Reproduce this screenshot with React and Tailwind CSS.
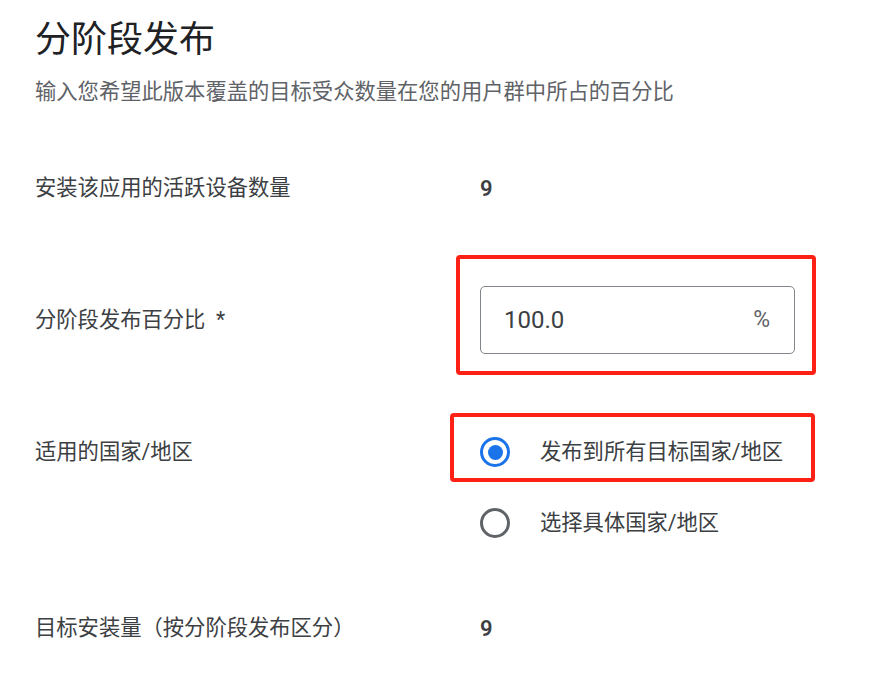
export default function App() {
  const cjk = { fontFamily: "Roboto, 'Noto Sans CJK SC', sans-serif" };

  const options = [
    { label: '发布到所有目标国家/地区', checked: true },
    { label: '选择具体国家/地区', checked: false },
  ];

  return (
    <div style={cjk} className="min-h-screen bg-white pl-[35px] pt-[16px] text-[#3c4043]">
      <h1 className="text-[36px] leading-[48px] text-[#202124]">分阶段发布</h1>
      <p className="mt-[12px] text-[21.3px] leading-[32px] text-[#5f6368]">
        输入您希望此版本覆盖的目标受众数量在您的用户群中所占的百分比
      </p>

      {/* 活跃设备 */}
      <div className="mt-[64px] flex items-center h-[32px]">
        <div className="w-[445px] text-[21.3px]">安装该应用的活跃设备数量</div>
        <div className="text-[22px] font-semibold text-[#3c4043]">9</div>
      </div>

      {/* 百分比 */}
      <div className="mt-[82px] flex items-center">
        <div className="w-[445px] text-[21.3px]">分阶段发布百分比&nbsp;&nbsp;*</div>
        <div className="relative">
          <div className="w-[315px] h-[68px] rounded-[5px] border border-[#80868b] flex items-center justify-between pl-[23px] pr-[24px]">
            <span className="text-[24px]">100.0</span>
            <span className="text-[23px] text-[#5f6368]">%</span>
          </div>
          <div className="absolute left-[-24px] top-[-31px] w-[360px] h-[120px] border-4 border-[#ff2116] rounded-[4px]" />
        </div>
      </div>

      {/* 国家/地区 */}
      <div className="mt-[68px] flex">
        <div className="w-[445px] h-[60px] flex items-center text-[21.3px]">适用的国家/地区</div>
        <div className="flex flex-col gap-[11px]">
          {options.map((opt) => (
            <div key={opt.label} className="relative h-[60px] flex items-center gap-[30px]">
              <div
                className={
                  opt.checked
                    ? 'w-[30px] h-[30px] rounded-full border-[3px] border-[#1a73e8] flex items-center justify-center'
                    : 'w-[30px] h-[30px] rounded-full border-[3px] border-[#5f6368]'
                }
              >
                {opt.checked && <div className="w-[15px] h-[15px] rounded-full bg-[#1a73e8]" />}
              </div>
              <span className="text-[21.3px]">{opt.label}</span>
              {opt.checked && (
                <div className="absolute left-[-30px] top-[-9px] w-[365px] h-[69px] border-4 border-[#ff2116] rounded-[4px]" />
              )}
            </div>
          ))}
        </div>
      </div>

      {/* 目标安装量 */}
      <div className="mt-[59px] flex items-center h-[32px]">
        <div className="w-[445px] text-[21.3px]">目标安装量（按分阶段发布区分）</div>
        <div className="text-[22px] font-semibold text-[#3c4043]">9</div>
      </div>
    </div>
  );
}
